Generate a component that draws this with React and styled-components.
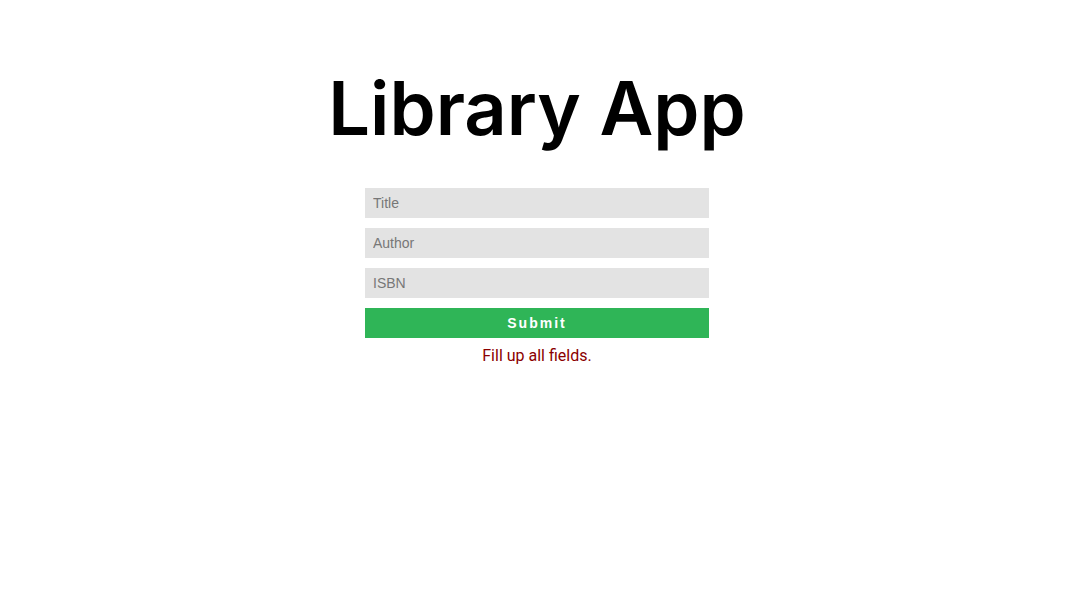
import React from 'react';
import styled, { createGlobalStyle } from 'styled-components';

const GlobalStyle = createGlobalStyle`
  html, body {
    margin: 0;
    padding: 0;
    background: #FFFFFF;
  }
`;

function App() {
  return (
    <>
      <GlobalStyle />
      <Page>
        <Heading>Library App</Heading>
        <Form onSubmit={e => e.preventDefault()}>
          <Field placeholder="Title" />
          <Field placeholder="Author" />
          <Field placeholder="ISBN" />
          <SubmitButton type="submit">Submit</SubmitButton>
          <Message>Fill up all fields.</Message>
        </Form>
      </Page>
    </>
  );
}

const Page = styled.div`
  display: flex;
  flex-direction: column;
  align-items: center;
  padding: 58px 3px 0 0;
`;

const Heading = styled.h1`
  margin: 0 0 30px;
  font-family: Inter, "Liberation Sans", sans-serif;
  font-weight: 600;
  font-size: 74px;
  line-height: 100px;
  letter-spacing: 0;
  color: #000000;
`;

const Form = styled.form`
  width: 344px;
  display: flex;
  flex-direction: column;
  gap: 10px;
`;

const Field = styled.input`
  height: 30px;
  box-sizing: border-box;
  border: none;
  outline: none;
  padding: 0 8px;
  background: #E3E3E3;
  font-family: "Liberation Sans", Arial, sans-serif;
  font-size: 14px;
  color: #333333;

  &::placeholder {
    color: #777777;
  }
`;

const SubmitButton = styled.button`
  height: 30px;
  border: none;
  background: #2FB557;
  color: #FFFFFF;
  font-family: "Liberation Sans", Arial, sans-serif;
  font-weight: 700;
  font-size: 14px;
  letter-spacing: 2px;
  cursor: pointer;
`;

const Message = styled.p`
  margin: -2px 0 0;
  text-align: center;
  font-family: Roboto, "Liberation Sans", sans-serif;
  font-size: 16px;
  color: #8B0000;
`;

export default App;
